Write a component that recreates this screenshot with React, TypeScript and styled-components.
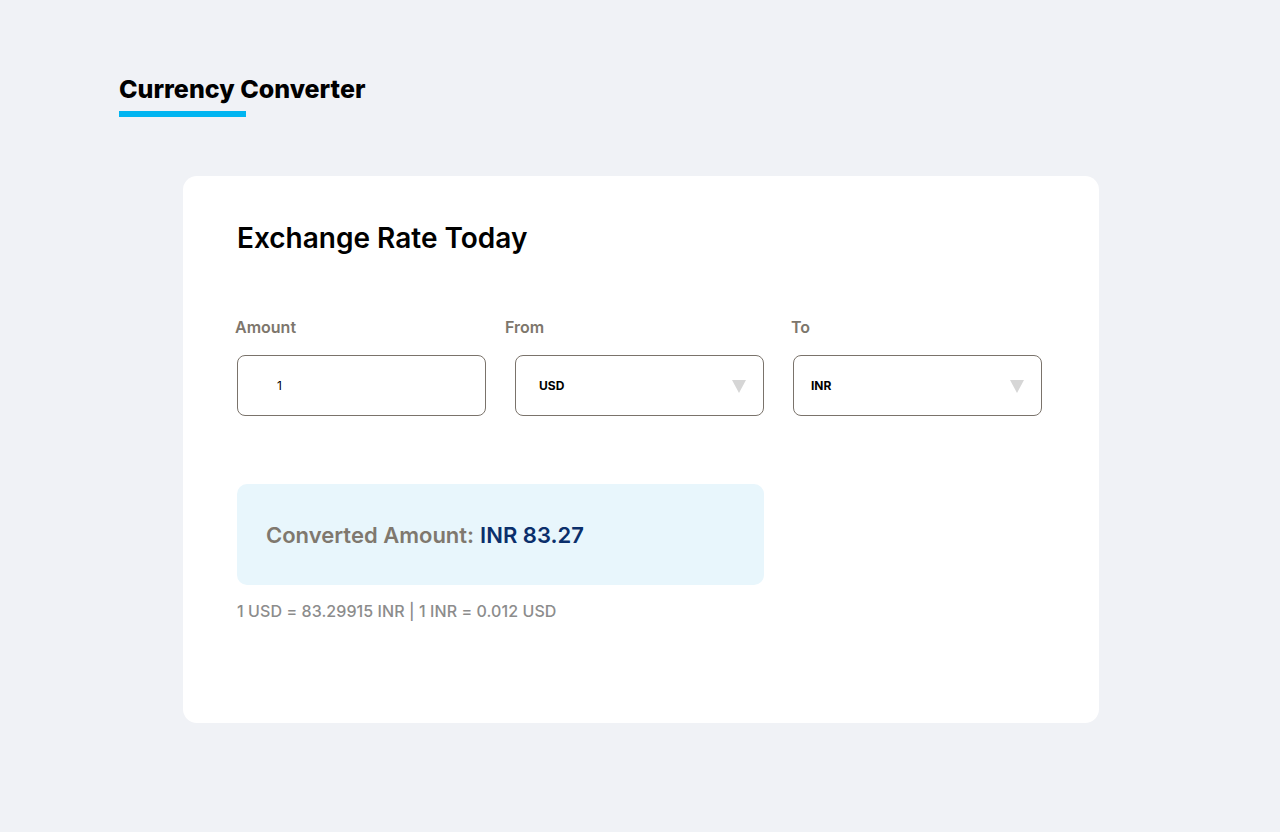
import React, {useState} from "react";
import styled, {createGlobalStyle} from "styled-components";

const GlobalStyle = createGlobalStyle`
  * {
    box-sizing: border-box;
  }
  body {
    margin: 0;
    background-color: #f0f2f6;
    font-family: Inter, "Noto Sans", sans-serif;
  }
`;

const Page = styled.div`
  display: flex;
  flex-direction: column;
  align-items: flex-start;
  min-height: 832px;
  padding: 75px 0 0 119px;
`;

const Title = styled.h1`
  margin: 0;
  font-size: 25px;
  line-height: 28px;
  font-weight: 800;
  color: #000;
`;

const TitleBar = styled.div`
  width: 127px;
  height: 6px;
  margin-top: 8px;
  background-color: #00b5f1;
`;

const Card = styled.div`
  display: flex;
  flex-direction: column;
  width: 916px;
  height: 547px;
  margin: 59px 0 0 64px;
  padding: 45px 54px 0;
  background-color: #fff;
  border-radius: 14px;
`;

const CardTitle = styled.h2`
  margin: 0;
  font-size: 28px;
  line-height: 34px;
  font-weight: 600;
  color: #000;
`;

const FieldsGrid = styled.div`
  display: grid;
  grid-template-columns: repeat(3, 249px);
  column-gap: 29px;
  row-gap: 18px;
  margin-top: 62px;
`;

const Label = styled.label<{ $shift: number }>`
  margin-left: ${(p) => p.$shift}px;
  font-size: 16px;
  line-height: 20px;
  font-weight: 600;
  color: #7d766c;
`;

const AmountInput = styled.input`
  width: 100%;
  height: 61px;
  padding: 0 0 0 39px;
  border: 1px solid #7a736b;
  border-radius: 8px;
  background: #fff;
  font-family: inherit;
  font-size: 12px;
  color: #000;
  outline: none;
`;

const SelectWrap = styled.div`
  position: relative;
  width: 100%;
  height: 61px;
`;

const Select = styled.select<{ $pad: number }>`
  width: 100%;
  height: 100%;
  padding: 0 0 0 ${(p) => p.$pad}px;
  border: 1px solid #7a736b;
  border-radius: 8px;
  background: #fff;
  appearance: none;
  font-family: inherit;
  font-size: 12px;
  font-weight: 700;
  color: #000;
  outline: none;
`;

const Caret = styled.svg`
  position: absolute;
  top: 25px;
  right: 18px;
  pointer-events: none;
`;

const ResultBox = styled.div`
  display: flex;
  align-items: center;
  width: 527px;
  height: 101px;
  margin-top: 68px;
  padding-left: 29px;
  background-color: #e8f6fc;
  border-radius: 10px;
  font-size: 22px;
  font-weight: 600;
  color: #7f786e;
`;

const ResultValue = styled.span`
  margin-left: 6px;
  color: #0b2f6b;
`;

const RateLine = styled.div`
  margin-top: 16px;
  font-size: 16px;
  line-height: 20px;
  font-weight: 500;
  letter-spacing: 0.08px;
  color: #8c8c8c;
`;

const currencies = ["USD", "INR", "EUR", "GBP", "JPY"];

interface CurrencySelectProps {
    value: string;
    pad: number;
    onChange: (v: string) => void;
}

const CurrencySelect = ({value, pad, onChange}: CurrencySelectProps) => (
    <SelectWrap>
        <Select $pad={pad} value={value} onChange={(e) => onChange(e.target.value)}>
            {currencies.map((c) => (
                <option key={c} value={c}>{c}</option>
            ))}
        </Select>
        <Caret width="14" height="13" viewBox="0 0 14 13">
            <path d="M0 0 H14 L7 13 Z" fill="#d6d6d6" />
        </Caret>
    </SelectWrap>
);

export default function App() {
    const [amount, setAmount] = useState("1");
    const [from, setFrom] = useState("USD");
    const [to, setTo] = useState("INR");

    return (
        <>
            <GlobalStyle />
            <Page>
                <Title>Currency Converter</Title>
                <TitleBar />
                <Card>
                    <CardTitle>Exchange Rate Today</CardTitle>
                    <FieldsGrid>
                        <Label $shift={-2}>Amount</Label>
                        <Label $shift={-10}>From</Label>
                        <Label $shift={-2}>To</Label>
                        <AmountInput value={amount} onChange={(e) => setAmount(e.target.value)} />
                        <CurrencySelect value={from} pad={23} onChange={setFrom} />
                        <CurrencySelect value={to} pad={17} onChange={setTo} />
                    </FieldsGrid>
                    <ResultBox>
                        Converted Amount:<ResultValue>INR 83.27</ResultValue>
                    </ResultBox>
                    <RateLine>1 USD = 83.29915 INR | 1 INR = 0.012 USD</RateLine>
                </Card>
            </Page>
        </>
    );
}
